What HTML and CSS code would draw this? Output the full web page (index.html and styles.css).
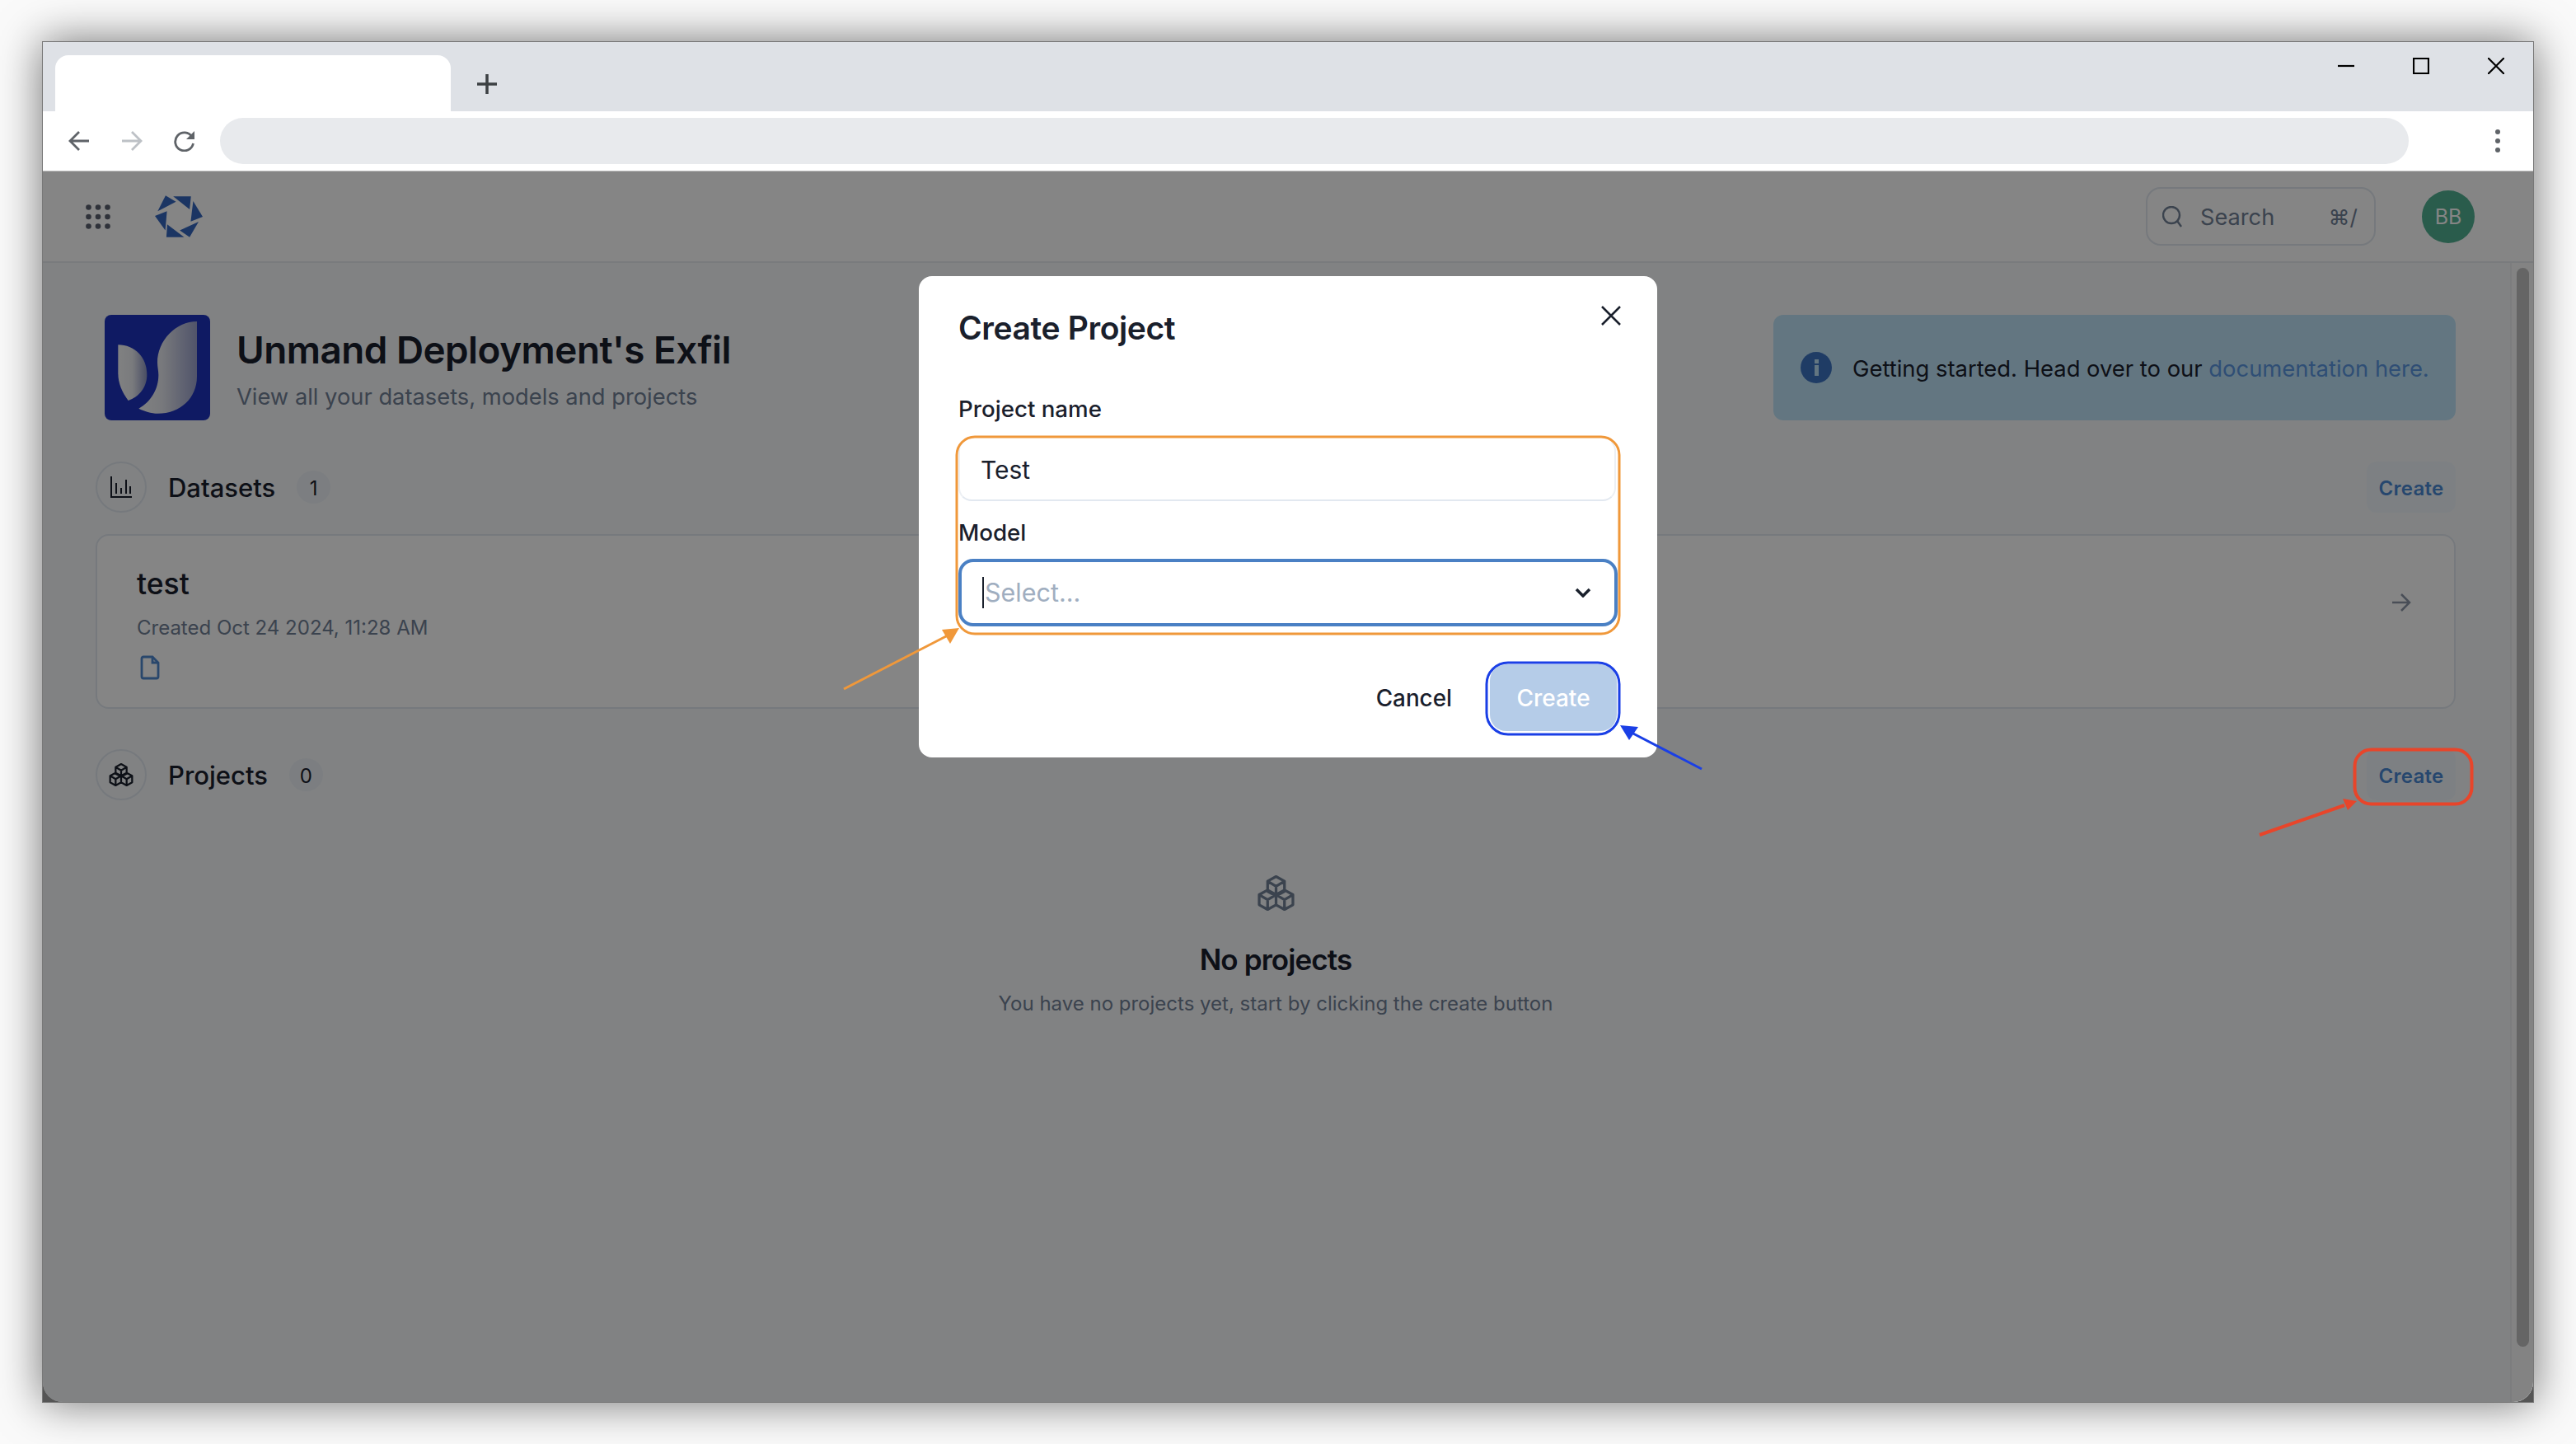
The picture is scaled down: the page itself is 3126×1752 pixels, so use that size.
FILE: index.html
```html
<!DOCTYPE html>
<html lang="en">
<head>
<meta charset="utf-8">
<title>Create Project</title>
<link rel="stylesheet" href="styles.css">
</head>
<body>
<div class="window">
  <div class="tabstrip">
    <div class="tab"></div>
    <svg class="plus" viewBox="0 0 26 26"><path d="M13 1v24M1 13h24"/></svg>
    <div class="winctl">
      <svg viewBox="0 0 20 20"><path d="M0 10h20"/></svg>
      <svg viewBox="0 0 20 20"><path d="M1 1h18v18H1z"/></svg>
      <svg viewBox="0 0 20 20"><path d="M0 0l20 20M20 0L0 20"/></svg>
    </div>
  </div>
  <div class="toolbar">
    <svg class="nav" viewBox="0 0 26 26"><path d="M25 13H2M13 2L2 13l11 11"/></svg>
    <svg class="nav off" viewBox="0 0 26 26"><path d="M1 13h23M13 2l11 11-11 11"/></svg>
    <svg class="nav" viewBox="0 0 26 26"><path d="M22 8a11 11 0 1 0 1.500 8"/><path class="solid" d="M25 1v10H15z"/></svg>
    <div class="omnibox"></div>
    <div class="kebab"><i></i><i></i><i></i></div>
  </div>
  <div class="app">
    <header class="topbar">
      <svg class="dots" viewBox="0 0 30 30">
        <circle cx="3.500" cy="3.500" r="3.300"/><circle cx="15" cy="3.500" r="3.300"/><circle cx="26.500" cy="3.500" r="3.300"/>
        <circle cx="3.500" cy="15" r="3.300"/><circle cx="15" cy="15" r="3.300"/><circle cx="26.500" cy="15" r="3.300"/>
        <circle cx="3.500" cy="26.500" r="3.300"/><circle cx="15" cy="26.500" r="3.300"/><circle cx="26.500" cy="26.500" r="3.300"/>
      </svg>
      <svg class="brand" viewBox="293 112 175 153">
        <path d="M332 112l38 23-67 35z"/><path d="M360 115h65l-5 48z"/><path d="M433 133l35 57-44 17z"/>
        <path d="M453 208l-33 57-36-25z"/><path d="M400 265h-65l3-47z"/><path d="M293 187l44-17-6 70z"/>
      </svg>
      <div class="search">
        <svg class="search-ic" viewBox="0 0 24 26"><circle cx="11" cy="11" r="10"/><path d="M18 18l5 7"/></svg>
        <span class="search-label">Search</span>
        <span class="search-kbd">⌘/</span>
      </div>
      <div class="avatar">BB</div>
    </header>
    <div class="body-row">
      <main class="main">
        <div class="hero">
          <svg class="tile" viewBox="111 546 384 384">
            <defs>
              <linearGradient id="leafA" x1="0" x2="1" y1="0" y2="0"><stop offset="0" stop-color="#f6f7f8"/><stop offset="0.500" stop-color="#e9ebf0"/><stop offset="1" stop-color="#8d94c0"/></linearGradient>
              <linearGradient id="leafB" x1="0" x2="1" y1="0" y2="0"><stop offset="0" stop-color="#f6f7f8"/><stop offset="0.400" stop-color="#e6e8ee"/><stop offset="1" stop-color="#9aa1cc"/></linearGradient>
            </defs>
            <rect class="tile-bg" x="111" y="546" width="384" height="384" rx="24"/>
            <path class="leaf-a" d="M160 655C220 655 265 700 265 765C265 810 235 845 197 858C175 830 160 795 160 760Z"/>
            <path class="leaf-b" d="M447 570V770C447 850 385 905 305 905C280 905 255 897 235 887C280 862 307 815 307 765C307 750 303 735 303 720C303 640 370 570 447 570Z"/>
          </svg>
          <div class="hero-text">
            <h1>Unmand Deployment's Exfil</h1>
            <p>View all your datasets, models and projects</p>
          </div>
          <div class="banner">
            <svg class="info" viewBox="0 0 40 40"><circle cx="20" cy="20" r="19"/><rect class="info-mark" x="18" y="17" width="5" height="13"/><rect class="info-mark" x="18" y="10" width="5" height="5"/></svg>
            <span>Getting started. Head over to our <a class="link">documentation here.</a></span>
          </div>
        </div>

        <section class="sec-head">
          <span class="sec-ic">
            <svg class="chart" viewBox="0 0 26 26"><path d="M1 0v25h25M7 8v13M13 14v7M19 4v17M24 12v9"/></svg>
          </span>
          <h2>Datasets</h2>
          <span class="count">1</span>
          <button class="ghost">Create</button>
        </section>

        <article class="card">
          <div class="card-text">
            <h3>test</h3>
            <div class="meta">Created Oct 24 2024, 11:28 AM</div>
            <svg class="file" viewBox="0 0 24 30"><path d="M2 4a2 2 0 0 1 2-2h11l7 7v17a2 2 0 0 1-2 2H4a2 2 0 0 1-2-2z"/><path d="M15 2v7h7"/></svg>
          </div>
          <svg class="go" viewBox="0 0 24 22"><path d="M1 11h21M12 1l10 10-10 10"/></svg>
        </article>

        <section class="sec-head sec-projects">
          <span class="sec-ic">
            <svg class="cubes cubes-sm" viewBox="0 0 44 42"><path d="M22 1.500L32 7V19L22 24.500L12 19V7ZM12 7L22 13L32 7M22 13V24.500M12 17.500L22 23V35L12 40.500L2 35V23ZM2 23L12 29L22 23M12 29V40.500M32 17.500L42 23V35L32 40.500L22 35V23ZM22 23L32 29L42 23M32 29V40.500"/></svg>
          </span>
          <h2>Projects</h2>
          <span class="count">0</span>
          <button class="ghost">Create</button>
        </section>

        <div class="empty">
          <svg class="cubes cubes-lg" viewBox="0 0 44 42"><path d="M22 1.500L32 7V19L22 24.500L12 19V7ZM12 7L22 13L32 7M22 13V24.500M12 17.500L22 23V35L12 40.500L2 35V23ZM2 23L12 29L22 23M12 29V40.500M32 17.500L42 23V35L32 40.500L22 35V23ZM22 23L32 29L42 23M32 29V40.500"/></svg>
          <h4>No projects</h4>
          <p>You have no projects yet, start by clicking the create button</p>
        </div>
      </main>
      <div class="scrollbar"><div class="thumb"></div></div>
    </div>
    <div class="overlay">
      <div class="modal">
        <div class="modal-head">
          <h5>Create Project</h5>
          <svg class="close" viewBox="0 0 24 24"><path d="M1 1l22 22M23 1L1 23"/></svg>
        </div>
        <label class="label">Project name</label>
        <div class="input">Test</div>
        <label class="label label-model">Model</label>
        <div class="select">
          <span class="placeholder">Select...</span>
          <svg class="chev" viewBox="0 0 20 12"><path d="M2 2l8 8 8-8"/></svg>
        </div>
        <div class="actions">
          <span class="cancel">Cancel</span>
          <span class="primary">Create</span>
        </div>
      </div>
    </div>
  </div>
</div>
<svg class="notes" viewBox="0 0 3126 1752">
  <rect class="n-orange" x="1161" y="530" width="804" height="239" rx="22"/>
  <path class="n-orange" d="M1024 836L1150 771"/>
  <path class="f-orange" d="M1164 762L1143 764L1153 781Z"/>
  <rect class="n-blue" x="1804" y="804" width="161" height="87" rx="26"/>
  <path class="n-blue" d="M2065 933L1980 889"/>
  <path class="f-blue" d="M1966 880L1988 882L1977 898Z"/>
  <rect class="n-red" x="2857.500" y="909.500" width="142" height="66" rx="20"/>
  <path class="n-red" d="M2742 1013L2845 977"/>
  <path class="f-red" d="M2860 972L2843 969L2849 983Z"/>
</svg>
</body>
</html>
```
FILE: styles.css
```css
* { box-sizing: border-box; }
html, body { margin: 0; padding: 0; }
body {
  position: relative;
  width: 3126px;
  height: 1752px;
  overflow: hidden;
  background: #fafafa;
  font-family: Inter, "Noto Sans", sans-serif;
  color: #1a202c;
  padding: 50px 51px 0;
}
h1, h2, h3, h4, h5, p { margin: 0; }

.window {
  width: 3024px;
  height: 1652px;
  display: flex;
  flex-direction: column;
  background: #555;
  border: 1px solid #777;
  box-shadow: 0 0 50px rgba(0, 0, 0, .55);
}

.tabstrip {
  height: 84px;
  flex: none;
  display: flex;
  align-items: flex-start;
  background: #dee1e6;
  padding: 16px 0 0 15px;
}
.tab { width: 480px; height: 68px; background: #fff; border-radius: 16px 16px 0 0; }
.plus { width: 26px; height: 26px; margin: 22px 0 0 31px; fill: none; stroke: #3c4043; stroke-width: 3.500; }
.winctl { margin-left: auto; display: flex; gap: 71px; padding: 3px 35px 0 0; }
.winctl svg { width: 20px; height: 20px; fill: none; stroke: #000; stroke-width: 2.200; }

.toolbar {
  height: 73px;
  flex: none;
  display: flex;
  align-items: center;
  gap: 38px;
  background: #fff;
  padding: 0 0 0 31px;
  border-bottom: 1px solid #c4c4c4;
}
.nav { width: 26px; height: 26px; fill: none; stroke: #5f6368; stroke-width: 2.800; }
.nav.off { stroke: #bdc1c6; }
.nav .solid { fill: #5f6368; stroke: none; }
.omnibox { width: 2656px; height: 56px; margin-left: -8px; background: #e8eaed; border-radius: 28px; }
.kebab { display: flex; flex-direction: column; gap: 5px; margin-left: 67px; }
.kebab i { display: block; width: 6px; height: 6px; border-radius: 50%; background: #5f6368; }

.app {
  position: relative;
  flex: 1;
  min-height: 0;
  display: flex;
  flex-direction: column;
  overflow: hidden;
  background: #f7fafc;
  border-radius: 0 0 24px 24px;
}

.topbar {
  height: 111px;
  flex: none;
  display: flex;
  align-items: center;
  padding: 0 71px 0 52px;
  background: #fff;
  border-bottom: 2px solid #e8ecf0;
}
.dots { width: 30px; height: 30px; fill: #5b6170; }
.brand { width: 58px; height: 51px; margin-left: 54px; fill: #3466be; }
.search {
  margin-left: auto;
  width: 279px;
  height: 71px;
  display: flex;
  align-items: center;
  padding: 0 20px 0 18px;
  border: 2px solid #e2e8f0;
  border-radius: 18px;
  font-size: 27.200px;
  color: #718096;
}
.search-ic { width: 24px; height: 26px; fill: none; stroke: #718096; stroke-width: 2.400; }
.search-label { margin-left: 22px; padding-top: 2px; }
.search-kbd { margin-left: auto; font-size: 26px; padding-top: 2px; }
.avatar {
  width: 64px;
  height: 64px;
  margin-left: 56px;
  border-radius: 50%;
  background: #51b192;
  color: #fff;
  display: flex;
  align-items: center;
  justify-content: center;
  font-size: 25px;
}

.body-row { flex: 1; min-height: 0; display: flex; }
.main { flex: 1; min-width: 0; padding: 63px 66px 0 64px; }
.scrollbar { width: 28px; flex: none; padding: 6px 5px 0 6px; border-left: 2px solid #edf0f2; background: #fbfbfb; }
.thumb { height: 1309px; background: #c1c1c1; border-radius: 8px; }

.hero { display: flex; align-items: center; height: 128px; padding-left: 11px; }
.tile { width: 128px; height: 128px; flex: none; }
.tile-bg { fill: #1d32be; }
.leaf-a { fill: url(#leafA); }
.leaf-b { fill: url(#leafB); }
.hero-text { margin-left: 32px; padding-top: 3px; }
h1 { font-size: 45.800px; line-height: 60px; font-weight: 600; letter-spacing: -.5px; color: #1a202c; }
.hero-text p { margin-top: 9px; font-size: 27.300px; line-height: 36px; color: #718096; }
.banner {
  margin-left: auto;
  width: 828px;
  height: 128px;
  display: flex;
  align-items: center;
  gap: 24px;
  padding-left: 32px;
  border-radius: 12px;
  background: #bee3f8;
  font-size: 27.400px;
  color: #1a202c;
  white-space: nowrap;
}
.banner span { padding-top: 2px; }
.info { width: 40px; height: 40px; flex: none; fill: #3d74c2; }
.info-mark { fill: #bee3f8; }
.link { color: #5a96e0; }

.sec-head { margin-top: 50px; height: 62px; display: flex; align-items: center; }
.sec-projects { margin-top: 49px; }
.sec-ic {
  width: 62px;
  height: 62px;
  flex: none;
  display: flex;
  align-items: center;
  justify-content: center;
  border: 2px solid #e2e8f0;
  border-radius: 50%;
  background: #f7fafc;
}
.chart { width: 26px; height: 26px; fill: none; stroke: #1a202c; stroke-width: 2; }
h2 { margin-left: 26px; padding-top: 2px; font-size: 31px; line-height: 40px; font-weight: 500; color: #1a202c; }
.count {
  margin-left: 26px;
  min-width: 41px;
  height: 40px;
  padding: 2px 12px 0;
  display: flex;
  align-items: center;
  justify-content: center;
  border-radius: 50%;
  background: #edf2f7;
  font-size: 24px;
  color: #1a202c;
}
.ghost {
  margin-left: auto;
  width: 108px;
  height: 62px;
  padding-top: 3px;
  border: 0;
  border-radius: 12px;
  background: #f0f6fb;
  font: 600 24px Inter, sans-serif;
  letter-spacing: .3px;
  color: #4a88d4;
}

.card {
  margin-top: 26px;
  height: 212px;
  display: flex;
  align-items: center;
  justify-content: space-between;
  padding: 0 52px 0 48px;
  background: #fff;
  border: 2px solid #e2e8f0;
  border-radius: 16px;
}
.card-text { display: flex; flex-direction: column; align-items: flex-start; }
h3 { padding-top: 3px; font-size: 35.500px; line-height: 44px; font-weight: 500; color: #1a202c; }
.meta { margin-top: 16px; font-size: 24px; line-height: 30px; color: #718096; }
.file { width: 24px; height: 30px; margin: 18px 0 0 4px; fill: none; stroke: #4f88d0; stroke-width: 2.800; }
.go { width: 24px; height: 22px; margin-top: -46px; fill: none; stroke: #8c96a8; stroke-width: 2.500; }

.cubes { fill: none; stroke-linejoin: round; }
.cubes-sm { width: 30px; height: 28px; stroke: #1a202c; stroke-width: 3.400; }
.cubes-lg { width: 45px; height: 43px; stroke: #718096; stroke-width: 3.200; }

.empty { margin-top: 91px; display: flex; flex-direction: column; align-items: center; }
h4 { margin-top: 37px; font-size: 35px; line-height: 44px; font-weight: 600; letter-spacing: -.9px; color: #1a202c; }
.empty p { margin-top: 16px; font-size: 24px; line-height: 32px; color: #718096; }

.overlay {
  position: absolute;
  inset: 0;
  display: flex;
  justify-content: center;
  align-items: flex-start;
  padding-top: 127px;
  background: rgba(0, 0, 0, .48);
}
.modal {
  width: 896px;
  height: 584px;
  padding: 0 48px;
  background: #fff;
  border-radius: 16px;
}
.modal-head { position: relative; height: 135px; padding-top: 38px; }
h5 { font-size: 39px; line-height: 50px; font-weight: 600; letter-spacing: -.4px; color: #1a202c; }
.close { position: absolute; right: -4px; top: 36px; width: 24px; height: 24px; fill: none; stroke: #1a202c; stroke-width: 2.500; }
.label { display: block; height: 61px; padding-top: 8px; font-size: 27.700px; line-height: 36px; font-weight: 500; color: #1a202c; }
.label-model { height: 70px; padding-top: 20px; }
.input {
  height: 77px;
  width: 798px;
  padding-left: 25px;
  display: flex;
  align-items: center;
  border: 2px solid #e2e8f0;
  border-top-color: transparent;
  border-left-color: #edf0f4;
  border-right-color: #edf0f4;
  border-radius: 16px;
  font-size: 30px;
  color: #1a202c;
}
.select {
  height: 82px;
  width: 800px;
  display: flex;
  align-items: center;
  justify-content: space-between;
  padding: 0 28px 0 25px;
  border: 4px solid #4a80c4;
  border-radius: 18px;
}
.placeholder { padding-left: 1px; border-left: 2px solid #1a202c; font-size: 30.500px; line-height: 38px; color: #a0aec0; }
.chev { width: 20px; height: 12px; fill: none; stroke: #1a202c; stroke-width: 3.500; }
.actions { margin-top: 46px; display: flex; align-items: center; justify-content: flex-end; width: 800px; }
.cancel { font-size: 27.800px; font-weight: 500; color: #1a202c; }
.primary {
  margin-left: 46px;
  width: 154px;
  height: 81px;
  display: flex;
  align-items: center;
  justify-content: center;
  margin-right: 1px;
  border-radius: 20px;
  background: #b5cce8;
  font-size: 28px;
  font-weight: 500;
  color: #fff;
}

.notes { position: absolute; left: 0; top: 0; width: 3126px; height: 1752px; fill: none; pointer-events: none; }
.n-orange { stroke: #f0983a; stroke-width: 3; }
.n-blue { stroke: #1a3fe6; stroke-width: 3; }
.n-red { stroke: #e8452a; stroke-width: 4; }
.f-orange { fill: #f0983a; }
.f-blue { fill: #1a3fe6; }
.f-red { fill: #e8452a; }
```
